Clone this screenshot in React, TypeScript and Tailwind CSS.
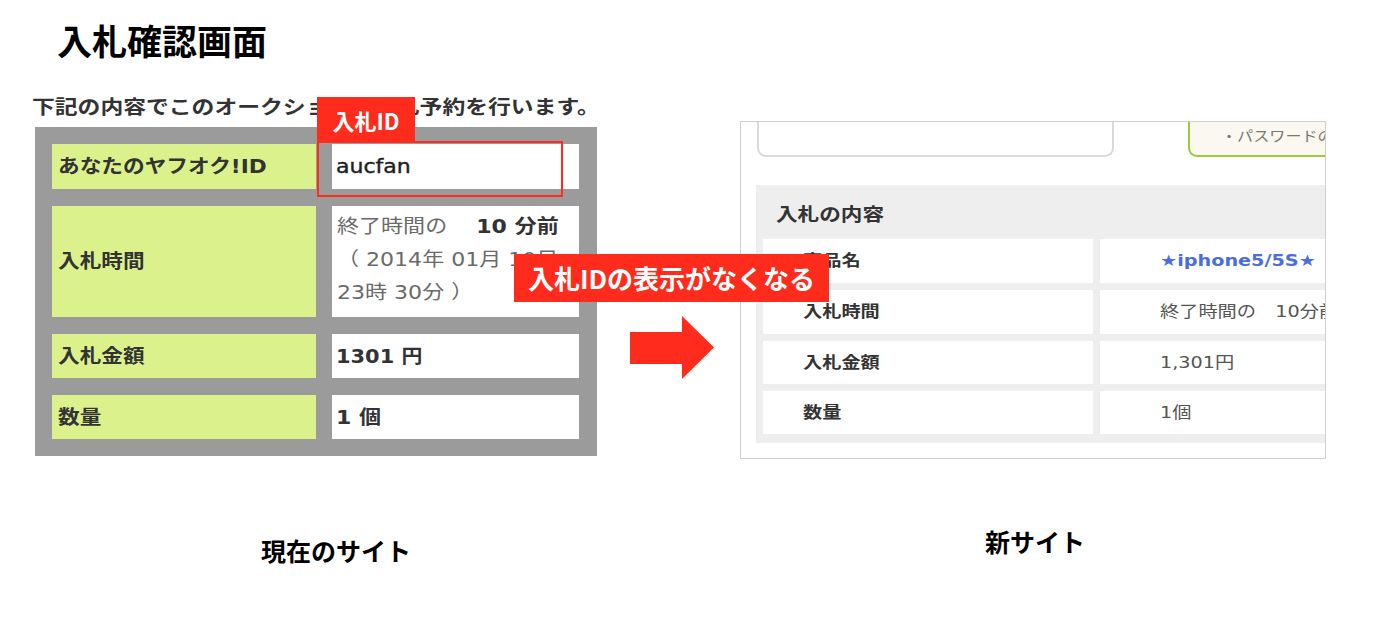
import React from "react";

const SLIDE = { fontFamily: '"Noto Sans CJK JP", "Noto Sans", sans-serif' };
const SHOT = { fontFamily: '"DejaVu Sans", "Noto Sans CJK JP", sans-serif' };

function LeftLabel({ children }: { children: React.ReactNode }) {
  return (
    <div className="bg-[#dbf28c] flex items-center pl-[6px] overflow-hidden">
      <span className="inline-block origin-left scale-x-[1.14] whitespace-nowrap text-[19px] font-bold text-[#333333]">
        {children}
      </span>
    </div>
  );
}

function RightRow({ label, children }: { label: string; children: React.ReactNode }) {
  return (
    <>
      <div className="bg-white flex items-center pl-[40px] overflow-hidden">
        <span className="inline-block origin-left scale-x-[1.2] whitespace-nowrap text-[16px] font-bold text-[#333333]">
          {label}
        </span>
      </div>
      <div className="bg-white flex items-center pl-[60px] overflow-hidden">{children}</div>
    </>
  );
}

export default function App() {
  return (
    <div className="relative w-[1386px] h-[644px] bg-white overflow-hidden text-black" style={SLIDE}>
      <h1 className="ml-[57px] pt-[20px] text-[35px] leading-[40px] font-bold">入札確認画面</h1>

      <div className="flex items-start mt-[35px]">
        {/* current site */}
        <section className="ml-[30px] w-[567px] shrink-0 flex flex-col" style={SHOT}>
          <p className="pl-[2px] h-[24px] leading-[24px]">
            <span className="inline-block origin-left scale-x-[1.2] whitespace-nowrap text-[19px] font-bold text-[#333333]">
              下記の内容でこのオークションに入札予約を行います。
            </span>
          </p>
          <div className="ml-[5px] mt-[8px] w-[562px] bg-[#9b9b9b] p-[17px] grid grid-cols-[264px_247px] grid-rows-[45px_111px_44px_44px] gap-x-[16px] gap-y-[17px]">
            <LeftLabel>あなたのヤフオク!ID</LeftLabel>
            <div className="bg-white flex items-center pl-[4px]">
              <span className="inline-block origin-left scale-x-[1.16] whitespace-nowrap text-[19px] text-[#1f1f1f] [-webkit-text-stroke:0.4px_#1f1f1f]">
                aucfan
              </span>
            </div>

            <LeftLabel>入札時間</LeftLabel>
            <div className="bg-white pl-[5px] pt-[4px] leading-[33px] text-[19px] text-[#6a6a6a] overflow-hidden">
              <div>
                <span className="inline-block origin-left scale-x-[1.16] whitespace-nowrap">
                  終了時間の　 <b className="text-[#333333]">10 分前</b>
                </span>
              </div>
              <div>
                <span className="inline-block origin-left scale-x-[1.16] whitespace-nowrap">（ 2014年 01月 10日</span>
              </div>
              <div>
                <span className="inline-block origin-left scale-x-[1.16] whitespace-nowrap">23時 30分 ）</span>
              </div>
            </div>

            <LeftLabel>入札金額</LeftLabel>
            <div className="bg-white flex items-center pl-[4px]">
              <span className="inline-block origin-left scale-x-[1.1] whitespace-nowrap text-[19px] font-bold text-[#333333]">
                1301 円
              </span>
            </div>

            <LeftLabel>数量</LeftLabel>
            <div className="bg-white flex items-center pl-[4px]">
              <span className="inline-block origin-left scale-x-[1.16] whitespace-nowrap text-[19px] font-bold text-[#333333]">
                1 個
              </span>
            </div>
          </div>
          <p className="ml-[231px] mt-[79px] text-[25px] leading-[30px] font-bold text-black" style={SLIDE}>
            現在のサイト
          </p>
        </section>

        {/* new site */}
        <section className="ml-[143px] mt-[26px] shrink-0 flex flex-col">
          <div className="w-[586px] h-[338px] border border-[#cfcfcf] bg-white overflow-hidden" style={SHOT}>
            <div className="flex h-[36px] -mt-px">
              <div className="ml-[16px] w-[357px] shrink-0 h-full border-2 border-t-0 border-[#dadada] rounded-b-[9px]" />
              <div className="ml-[74px] w-[200px] shrink-0 h-full border-2 border-t-0 border-r-0 border-[#9ccb3b] rounded-bl-[9px] bg-[#faf8f0] flex items-center pl-[31px] pb-[4px] overflow-hidden">
                <span className="inline-block origin-left scale-x-[1.15] whitespace-nowrap text-[14px] text-[#777777]">
                  ・パスワードの
                </span>
              </div>
            </div>
            <div className="mt-[28px] ml-[15px] w-[620px] h-[258px] bg-[#eeeeee] px-[7px]">
              <div className="h-[54px] flex items-center pl-[13px] pt-[4px]">
                <span className="inline-block origin-left scale-x-[1.2] whitespace-nowrap text-[18px] font-bold text-[#333333]">
                  入札の内容
                </span>
              </div>
              <div className="grid grid-cols-[330px_1fr] grid-rows-[44px_44px_43px_43px] gap-[7px]">
                <RightRow label="商品名">
                  <span className="inline-block origin-left scale-x-[1.2] whitespace-nowrap text-[16px] font-bold text-[#4a6ee0]">
                    ★iphone5/5S★
                  </span>
                </RightRow>
                <RightRow label="入札時間">
                  <span className="inline-block origin-left scale-x-[1.2] whitespace-nowrap text-[16px] text-[#555555]">
                    終了時間の　10分前
                  </span>
                </RightRow>
                <RightRow label="入札金額">
                  <span className="inline-block origin-left scale-x-[1.2] whitespace-nowrap text-[16px] text-[#555555]">
                    1,301円
                  </span>
                </RightRow>
                <RightRow label="数量">
                  <span className="inline-block origin-left scale-x-[1.2] whitespace-nowrap text-[16px] text-[#555555]">
                    1個
                  </span>
                </RightRow>
              </div>
            </div>
          </div>
          <p className="ml-[245px] mt-[67px] text-[25px] leading-[30px] font-bold text-black">新サイト</p>
        </section>
      </div>

      {/* overlays */}
      <div className="absolute left-[317px] top-[97px] w-[98px] h-[46px] bg-[#ff2b1c] text-white text-[22px] font-bold leading-[46px] text-center">
        入札ID
      </div>
      <div className="absolute left-[317px] top-[141px] w-[246px] h-[56px] border-2 border-[#ff2b1c]" />
      <div className="absolute left-[514px] top-[254px] w-[315px] h-[48px] bg-[#ff2b1c] text-white text-[26px] font-bold leading-[48px] text-center">
        入札IDの表示がなくなる
      </div>
      <svg className="absolute left-[630px] top-[316px]" width="84" height="63" viewBox="0 0 84 63">
        <polygon points="0,16 52,16 52,0 84,31.5 52,63 52,48 0,48" fill="#ff2b1c" />
      </svg>
    </div>
  );
}
